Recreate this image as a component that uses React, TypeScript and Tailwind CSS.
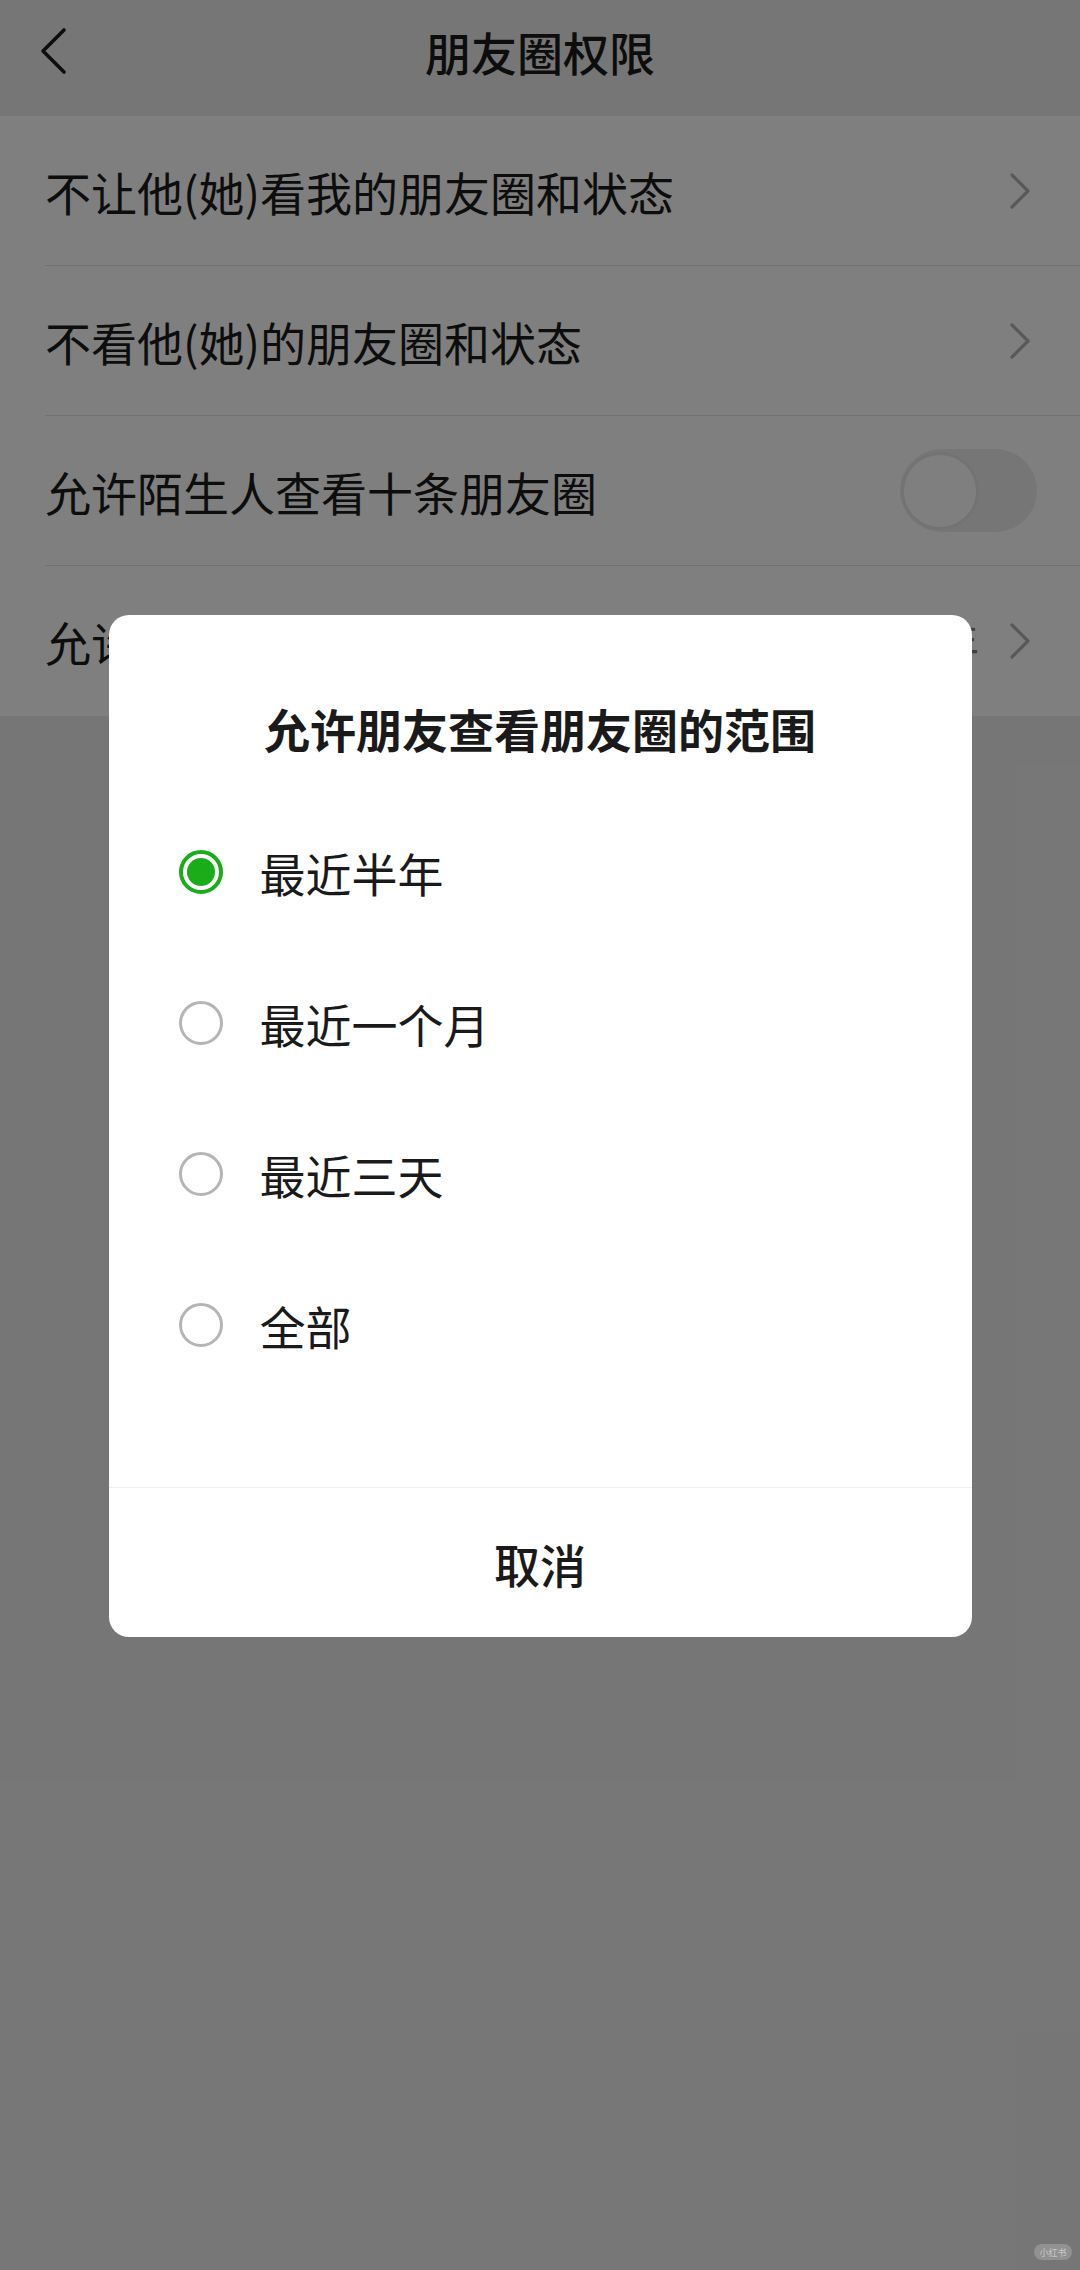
import React from 'react';

const rows = [
  { label: '不让他(她)看我的朋友圈和状态', kind: 'link' },
  { label: '不看他(她)的朋友圈和状态', kind: 'link' },
  { label: '允许陌生人查看十条朋友圈', kind: 'toggle' },
  { label: '允许朋友查看朋友圈的范围', kind: 'link', value: '最近半年' },
];

const options = ['最近半年', '最近一个月', '最近三天', '全部'];

const Chevron: React.FC = () => (
  <svg width="22" height="36" viewBox="0 0 22 36" fill="none">
    <path d="M3 2 L19 18 L3 34" stroke="#b2b2b2" strokeWidth="3.2" strokeLinecap="round" strokeLinejoin="round" />
  </svg>
);

const Radio: React.FC<{ checked: boolean }> = ({ checked }) =>
  checked ? (
    <div className="w-[44px] h-[44px] rounded-full border-[4px] border-[#1aad19] flex items-center justify-center shrink-0">
      <div className="w-[28px] h-[28px] rounded-full bg-[#1aad19]" />
    </div>
  ) : (
    <div className="w-[44px] h-[44px] rounded-full border-[3px] border-[#b5b5b5] shrink-0" />
  );

export default function App() {
  return (
    <div className="relative w-[1080px] h-[2270px] overflow-hidden bg-[#ededed] font-['Noto_Sans_CJK_SC',sans-serif] text-[#1a1a1a]">
      {/* Header */}
      <div className="h-[116px] pb-[14px] grid grid-cols-[1fr_auto_1fr] items-center">
        <div className="pl-[40px] flex items-center">
          <svg width="28" height="48" viewBox="0 0 28 48" fill="none">
            <path d="M24 3 L3 24 L24 45" stroke="#1a1a1a" strokeWidth="3.6" strokeLinecap="round" strokeLinejoin="round" />
          </svg>
        </div>
        <div className="text-[46px] leading-none font-medium">朋友圈权限</div>
        <div />
      </div>

      {/* Settings list */}
      <div className="bg-white">
        {rows.map((row, i) => (
          <div key={row.label} className="pl-[45px]">
            <div
              className={`flex items-center h-[150px] ${i < rows.length - 1 ? 'border-b border-[#e5e5e5]' : ''} ${
                row.kind === 'toggle' ? 'pr-[43px]' : 'pr-[49px]'
              }`}
            >
              <div className="flex-1 text-[46px] leading-none whitespace-nowrap">{row.label}</div>
              {row.value && <div className="text-[44px] leading-none text-[#808080] mr-[30px]">{row.value}</div>}
              {row.kind === 'link' && <Chevron />}
              {row.kind === 'toggle' && (
                <div className="w-[137px] h-[83px] rounded-full bg-[#ededed] flex items-center pl-[1px]">
                  <div className="w-[78px] h-[78px] rounded-full bg-white border-[3px] border-[#e6e6e6]" />
                </div>
              )}
            </div>
          </div>
        ))}
      </div>

      {/* Mask + dialog */}
      <div className="absolute inset-0 bg-black/50 flex flex-col items-center pt-[615px]">
        <div className="w-[863px] bg-white rounded-[20px] overflow-hidden">
          <div className="mt-[83px] h-[60px] flex items-center justify-center text-[46px] leading-none font-bold">
            允许朋友查看朋友圈的范围
          </div>
          <div className="mt-[38px] pb-[87px]">
            {options.map((opt, i) => (
              <div key={opt} className="h-[151px] flex items-center pl-[70px] gap-[37px]">
                <Radio checked={i === 0} />
                <span className="text-[46px] leading-none">{opt}</span>
              </div>
            ))}
          </div>
          <div className="border-t border-[#f0f0f0] h-[150px] flex items-center justify-center text-[46px] leading-none font-medium">
            取消
          </div>
        </div>
      </div>

      {/* Watermark */}
      <div className="absolute right-[8px] bottom-[10px] w-[38px] h-[16px] rounded-full bg-white/20 flex items-center justify-center text-[9px] leading-none text-white/50">
        小红书
      </div>
    </div>
  );
}
